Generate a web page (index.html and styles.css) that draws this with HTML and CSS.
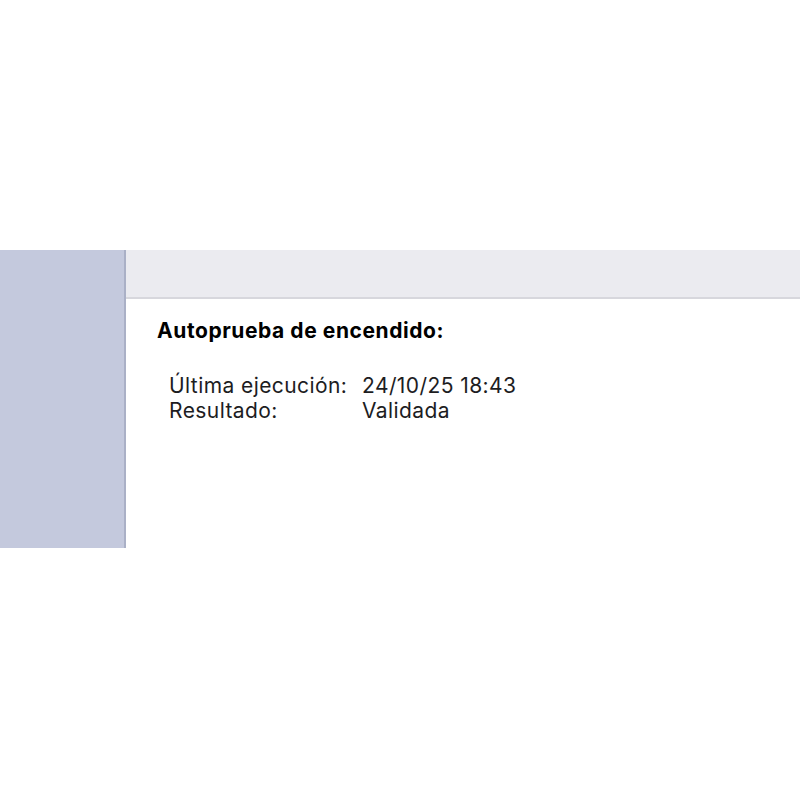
FILE: index.html
```html
<!DOCTYPE html>
<html lang="es">
<head>
<meta charset="utf-8">
<link rel="stylesheet" href="styles.css">
</head>
<body>
<div class="window">
  <aside class="sidebar"></aside>
  <main class="content">
    <div class="toolbar"></div>
    <section class="panel">
      <h2 class="title">Autoprueba de encendido:</h2>
      <div class="rows">
        <div class="label">Última ejecución:</div>
        <div class="value">24/10/25 18:43</div>
        <div class="label">Resultado:</div>
        <div class="value">Validada</div>
      </div>
    </section>
  </main>
</div>
</body>
</html>
```
FILE: styles.css
```css
html, body {
  margin: 0;
  padding: 0;
  background: #ffffff;
}
body {
  width: 800px;
  height: 800px;
  font-family: Inter, "Liberation Sans", sans-serif;
  color: #1d1d1f;
}
.window {
  margin-top: 250px;
  display: flex;
  height: 298px;
}
.sidebar {
  width: 124px;
  background: #c4c9dd;
  border-right: 2px solid #aab0c6;
}
.content {
  flex: 1;
  display: flex;
  flex-direction: column;
}
.toolbar {
  height: 47px;
  background: #ebebf0;
  border-bottom: 2px solid #d7d7dd;
}
.panel {
  padding: 19px 0 0 31px;
}
.title {
  margin: 0;
  font-size: 21px;
  font-weight: 700;
  line-height: 26px;
  letter-spacing: 0.57px;
  color: #000;
}
.rows {
  display: grid;
  grid-template-columns: 193px auto;
  margin: 29px 0 0 12px;
  font-size: 21px;
  line-height: 25px;
  letter-spacing: 0.42px;
  color: #1d1d1f;
}
```
